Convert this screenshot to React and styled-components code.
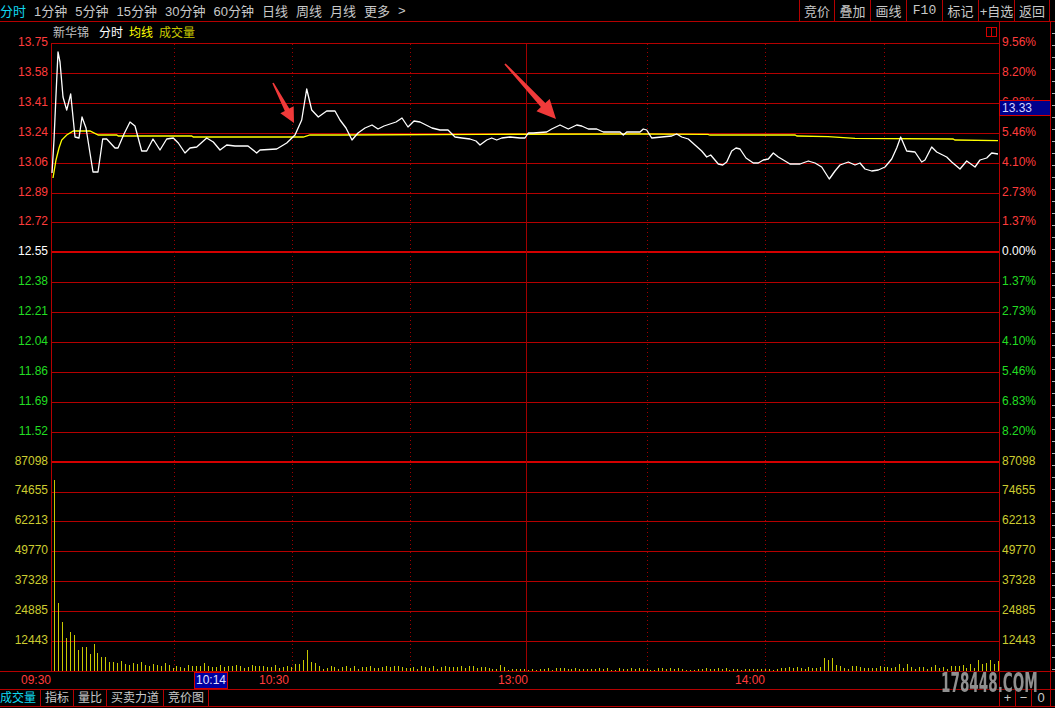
import React from "react";
import styled, { createGlobalStyle } from "styled-components";

const LINE = "#b40000";
const LINE_HI = "#d40000";
const RED = "#ff3c3c";
const GREEN = "#22dd22";
const YELLOW = "#cccc30";
const GRAY = "#c8c8c8";
const CYAN = "#10d8f0";

const STEP = 628 / 21; // 가격/거래량 눈금 간격

const GlobalStyle = createGlobalStyle`
  html, body { margin: 0; padding: 0; background: #000; }
  body { font-family: "Liberation Sans", "Noto Sans CJK SC", sans-serif; }
`;

const Screen = styled.div`
  position: relative;
  width: 1055px;
  height: 708px;
  overflow: hidden;
  background: #000;
  display: flex;
  flex-direction: column;
`;

const Toolbar = styled.div`
  display: flex;
  height: 22px;
  box-sizing: border-box;
  border-bottom: 1px solid ${LINE};
  padding-right: 5px;
`;

const Periods = styled.div`
  flex: 1;
  display: flex;
  align-items: center;
  gap: 8px;
  font-size: 13px;
`;

const Period = styled.span`
  color: ${(p) => (p.$active ? CYAN : GRAY)};
  white-space: nowrap;
`;

const ToolBtn = styled.div`
  width: ${(p) => p.$w}px;
  box-sizing: border-box;
  border-left: 1px solid ${LINE};
  display: flex;
  align-items: center;
  justify-content: center;
  color: ${GRAY};
  font-size: 13px;
  font-family: ${(p) => (p.$mono ? '"Liberation Mono", monospace' : "inherit")};
  &:last-child {
    border-right: 1px solid ${LINE};
  }
`;

const Body = styled.div`
  display: grid;
  grid-template-columns: 51px 948px 52px 4px;
  grid-template-rows: 21px 628px;
`;

const AxisColumn = styled.div`
  grid-column: ${(p) => p.$col};
  grid-row: 1 / 3;
  position: relative;
  display: flex;
  flex-direction: column;
  padding-top: ${21 - STEP / 2}px;
  box-sizing: border-box;
  ${(p) =>
    p.$side === "right" &&
    `border-left: 1px solid ${LINE}; border-right: 1px solid ${LINE};`}
`;

const AxisLabel = styled.div`
  height: ${STEP}px;
  line-height: ${STEP}px;
  flex-shrink: 0;
  font-size: 12px;
  color: ${(p) => p.$color};
  text-align: ${(p) => (p.$side === "right" ? "left" : "right")};
  padding: ${(p) => (p.$side === "right" ? "0 0 0 2px" : "0 3px 0 0")};
  white-space: nowrap;
`;

// 십자선 가격 표시
const PriceTag = styled.div`
  position: absolute;
  left: -1px;
  right: -1px;
  top: 78px;
  height: 16px;
  box-sizing: border-box;
  background: #00008c;
  border: 1px solid ${LINE_HI};
  color: #d4d4ff;
  font-size: 12px;
  line-height: 14px;
  padding-left: 2px;
`;

const Legend = styled.div`
  grid-column: 2;
  grid-row: 1;
  display: flex;
  align-items: center;
  padding: 0 2px 2px;
  font-size: 12px;
`;

const LegendItem = styled.span`
  color: ${(p) => p.$color};
  margin-right: ${(p) => p.$gap || 6}px;
`;

const Filler = styled.div`
  flex: 1;
`;

const ChartSvg = styled.svg`
  grid-column: 2;
  grid-row: 2;
  display: block;
`;

const Strip = styled.div`
  grid-column: 4;
  grid-row: 1 / 3;
  background: repeating-linear-gradient(to bottom, transparent 0 11px, #b0b0b0 11px 12px);
  background-size: 3px 100%;
  background-repeat: no-repeat;
  background-position: 1px 0;
`;

const TimeRow = styled.div`
  display: flex;
  height: 18px;
  box-sizing: border-box;
  border-top: 1px solid ${LINE};
  font-size: 12px;
  padding-right: 4px;
`;

const TimeCell = styled.div`
  width: ${(p) => p.$w}px;
  flex-shrink: 0;
  text-align: right;
  color: ${RED};
  line-height: 17px;
`;

const CursorTime = styled.div`
  width: 34px;
  box-sizing: border-box;
  background: #0000a0;
  border: 1px solid ${LINE_HI};
  color: #e0e0ff;
  text-align: center;
  line-height: 15px;
`;

const AxisEnd = styled.div`
  width: 52px;
  box-sizing: border-box;
  border-left: 1px solid ${LINE};
  border-right: 1px solid ${LINE};
`;

const TabRow = styled.div`
  display: flex;
  height: 18px;
  box-sizing: border-box;
  border-top: 1px solid ${LINE};
  border-bottom: 1px solid ${LINE};
  font-size: 12px;
  padding-right: 4px;
`;

const Tab = styled.div`
  padding: 0 4px;
  &:first-child {
    padding-left: 0;
  }
  border-right: 1px solid ${LINE};
  color: ${(p) => (p.$active ? CYAN : GRAY)};
  line-height: 16px;
  white-space: nowrap;
`;

const ZoomBtn = styled.div`
  width: ${(p) => p.$w}px;
  box-sizing: border-box;
  border-left: 1px solid ${LINE};
  color: ${GRAY};
  text-align: center;
  line-height: 16px;
  font-size: 13px;
  &:last-child {
    border-right: 1px solid ${LINE};
  }
`;

const Watermark = styled.div`
  position: absolute;
  left: 941px;
  top: 668px;
  font-family: "DejaVu Sans Condensed", "DejaVu Sans", sans-serif;
  font-weight: bold;
  font-size: 26px;
  color: rgba(185, 185, 185, 0.78);
  transform: scaleX(0.58);
  transform-origin: left top;
  filter: blur(0.7px);
  text-shadow: 0 0 3px #000;
  pointer-events: none;
`;

const periods = ["分时", "1分钟", "5分钟", "15分钟", "30分钟", "60分钟", "日线", "周线", "月线", "更多", ">"];
const tools = [
  { t: "竞价", w: 35 },
  { t: "叠加", w: 36 },
  { t: "画线", w: 36 },
  { t: "F10", w: 36, mono: true },
  { t: "标记", w: 36 },
  { t: "+自选", w: 36 },
  { t: "返回", w: 36 },
];

const leftLabels = [
  ["13.75", RED], ["13.58", RED], ["13.41", RED], ["13.24", RED], ["13.06", RED], ["12.89", RED], ["12.72", RED],
  ["12.55", "#ffffff"],
  ["12.38", GREEN], ["12.21", GREEN], ["12.04", GREEN], ["11.86", GREEN], ["11.69", GREEN], ["11.52", GREEN],
  ["87098", YELLOW], ["74655", YELLOW], ["62213", YELLOW], ["49770", YELLOW], ["37328", YELLOW], ["24885", YELLOW], ["12443", YELLOW],
];

const rightLabels = [
  ["9.56%", RED], ["8.20%", RED], ["6.83%", RED], ["5.46%", RED], ["4.10%", RED], ["2.73%", RED], ["1.37%", RED],
  ["0.00%", "#ffffff"],
  ["1.37%", GREEN], ["2.73%", GREEN], ["4.10%", GREEN], ["5.46%", GREEN], ["6.83%", GREEN], ["8.20%", GREEN],
  ["87098", YELLOW], ["74655", YELLOW], ["62213", YELLOW], ["49770", YELLOW], ["37328", YELLOW], ["24885", YELLOW], ["12443", YELLOW],
];

// 분시 가격선 (화면 좌표)
const pricePts = [
  [52, 173], [54, 140], [56, 95], [58, 52], [60, 62], [63, 97], [66.7, 110], [70.7, 94], [75, 137], [79, 138], [82, 117],
  [86, 128], [93, 172], [98, 172], [102.7, 139], [106.7, 139], [115, 148], [118, 148], [124, 134], [130, 122], [135, 126],
  [141.7, 151], [146.7, 151], [153, 139], [160, 150], [166.7, 139], [173.3, 138], [178.3, 143], [185, 153], [190, 148],
  [196.7, 147], [206.7, 138], [213.3, 142], [220, 150], [226.7, 145], [235, 146], [248, 146], [256.7, 153], [260, 150],
  [276.7, 149], [286.7, 143], [295, 135], [301.7, 120], [306.7, 89], [311.7, 110], [318.3, 117], [326.7, 111], [335, 111],
  [340, 120], [346, 128], [352, 140], [358, 133], [365, 128], [372, 125], [378, 129], [384, 126], [390, 124], [396, 122],
  [402, 118], [408, 127], [414, 121], [420, 122], [426, 125], [432, 128], [440, 130], [448, 130], [455, 137], [462, 138],
  [470, 139], [476, 141], [480, 145], [486.7, 140], [491.7, 138], [496.7, 140], [501.7, 138], [510, 137], [520, 138],
  [525, 138], [528.3, 133], [533.3, 133], [546.7, 132], [551.7, 129], [560, 125], [568.3, 129], [576.7, 125], [581.7, 126],
  [588.3, 129], [596.7, 129], [603.3, 132], [620, 132], [623.3, 135], [626.7, 132], [640, 132], [643.3, 129], [646.7, 130],
  [651.7, 138], [671.7, 136], [676.7, 134], [681.7, 137], [688.3, 139], [695, 145], [701.7, 151], [706.7, 157], [710.7, 155],
  [718.3, 164], [722.7, 165], [726.7, 162], [731.7, 151], [736, 148], [740, 149], [746, 158], [753.3, 163], [758.3, 163],
  [763.3, 160], [768.3, 159], [773.3, 153], [778.3, 157], [781.7, 159], [790, 164], [800, 164], [808.3, 161], [815, 163],
  [821.7, 167], [829.3, 179], [835, 171], [840, 165], [848.3, 162], [855, 165], [860, 163], [865, 169], [871.7, 171],
  [878.3, 170], [885, 167], [891.7, 159], [896.7, 148], [900.7, 137], [906.7, 151], [915, 152], [921.7, 162], [925, 160],
  [931.7, 147], [936.7, 152], [946.7, 157], [951.7, 162], [960, 169], [966.7, 161], [975, 167], [980, 160], [986.7, 158],
  [991.7, 153], [998, 154],
];

// 균선
const avgPts = [
  [53, 178], [56, 160], [59, 148], [61.7, 140], [66.7, 135], [73.3, 131], [90, 131], [98.3, 135], [116.7, 135], [118.3, 136],
  [191.7, 136], [193.3, 137], [303.3, 137], [310, 135], [340, 135], [480, 134.3], [640, 134], [708, 134.3], [710, 135],
  [795, 135], [797, 136], [828, 136.7], [855, 138.3], [953, 139], [955, 140], [998, 140.7],
];

const volumeBars = (() => {
  let seed = 11;
  const rnd = () => {
    seed = (seed * 16807) % 2147483647;
    return seed / 2147483647;
  };
  const head = [191, 68, 49, 33, 39, 36, 21, 24, 24, 17, 27, 18, 14, 14, 9, 9, 8, 10, 7, 6, 8, 7, 9, 6, 5, 7, 6, 5, 8, 6];
  const spikes = {
    38: 8, 61: 7, 62: 7, 63: 11, 64: 21, 65: 9, 66: 8, 67: 5, 87: 5, 113: 6, 195: 13, 196: 11, 197: 13, 198: 6,
    214: 7, 216: 7, 223: 6, 230: 6, 232: 7, 234: 11, 235: 7, 236: 8, 237: 11, 238: 7, 239: 10,
  };
  const out = [];
  for (let i = 0; i < 240; i++) {
    let h;
    if (i < head.length) h = head[i];
    else if (spikes[i]) h = spikes[i];
    else if (i < 60) h = 3 + Math.round(rnd() * 4);
    else if (i < 115) h = 2 + Math.round(rnd() * 3);
    else if (i < 185) h = 1 + Math.round(rnd() * 2);
    else h = 2 + Math.round(rnd() * 3);
    out.push(h);
  }
  return out;
})();

const toPoints = (pts) => pts.map((p) => p.join(",")).join(" ");

const arrowPoints = (tx, ty, hx, hy, headLen, headW, shaftW) => {
  const len = Math.hypot(hx - tx, hy - ty);
  const ux = (hx - tx) / len;
  const uy = (hy - ty) / len;
  const nx = -uy;
  const ny = ux;
  const bx = hx - ux * headLen;
  const by = hy - uy * headLen;
  return toPoints([
    [tx + nx * 0.8, ty + ny * 0.8],
    [bx + (nx * shaftW) / 2, by + (ny * shaftW) / 2],
    [bx + (nx * headW) / 2, by + (ny * headW) / 2],
    [hx, hy],
    [bx - (nx * headW) / 2, by - (ny * headW) / 2],
    [bx - (nx * shaftW) / 2, by - (ny * shaftW) / 2],
    [tx - nx * 0.8, ty - ny * 0.8],
  ]);
};

const PanelIcon = () => (
  <svg width="11" height="10" viewBox="0 0 11 10">
    <rect x="0.5" y="0.5" width="10" height="9" fill="none" stroke={LINE_HI} />
    <line x1="5.5" y1="0" x2="5.5" y2="10" stroke={LINE_HI} />
  </svg>
);

const Chart = () => {
  const rows = Array.from({ length: 20 }, (_, i) => i + 1);
  const dotted = [174, 292, 410, 647, 765, 884];
  return (
    <ChartSvg width="948" height="628" viewBox="51 43 948 628">
      <g shapeRendering="crispEdges">
        <line x1="51" y1="43.5" x2="999" y2="43.5" stroke={LINE} />
        <line x1="51.5" y1="43" x2="51.5" y2="671" stroke={LINE} />
        {rows.map((i) => {
          const thick = i === 7 || i === 14;
          const y = Math.round(43 + i * STEP) + (thick ? 0 : 0.5);
          return (
            <line key={i} x1="52" y1={y} x2="999" y2={y} stroke={thick ? LINE_HI : LINE} strokeWidth={thick ? 2 : 1} />
          );
        })}
        {dotted.map((x) => (
          <line key={x} x1={x + 0.5} y1="44" x2={x + 0.5} y2="671" stroke="#a00000" strokeDasharray="1 3" />
        ))}
        <line x1="526.5" y1="44" x2="526.5" y2="671" stroke="#a00000" />
        {volumeBars.map((h, i) => {
          const x = Math.round(54 + i * 3.95) + 0.5;
          return <line key={i} x1={x} y1="671" x2={x} y2={671 - h} stroke="#c8c800" />;
        })}
      </g>
      <polyline points={toPoints(avgPts)} fill="none" stroke="#ffff00" strokeWidth="1.3" />
      <polyline points={toPoints(pricePts)} fill="none" stroke="#ffffff" strokeWidth="1.3" strokeLinejoin="round" />
      <polygon points={arrowPoints(273, 83, 294, 123, 15, 15, 5)} fill="#f03a3a" />
      <polygon points={arrowPoints(505, 64, 556, 119, 19, 18, 6)} fill="#f03a3a" />
    </ChartSvg>
  );
};

const App = () => {
  return (
    <>
      <GlobalStyle />
      <Screen>
        <Toolbar>
          <Periods>
            {periods.map((p, i) => (
              <Period key={p} $active={i === 0}>
                {p}
              </Period>
            ))}
          </Periods>
          {tools.map((b) => (
            <ToolBtn key={b.t} $w={b.w} $mono={b.mono}>
              {b.t}
            </ToolBtn>
          ))}
        </Toolbar>

        <Body>
          <AxisColumn $col={1}>
            {leftLabels.map(([t, c], i) => (
              <AxisLabel key={i} $color={c}>
                {t}
              </AxisLabel>
            ))}
          </AxisColumn>

          <Legend>
            <LegendItem $color="#c0c0c0" $gap={10}>新华锦</LegendItem>
            <LegendItem $color="#ffffff">分时</LegendItem>
            <LegendItem $color="#ffff00">均线</LegendItem>
            <LegendItem $color="#c8c800">成交量</LegendItem>
            <Filler />
            <PanelIcon />
          </Legend>

          <Chart />

          <AxisColumn $col={3} $side="right">
            {rightLabels.map(([t, c], i) => (
              <AxisLabel key={i} $color={c} $side="right">
                {t}
              </AxisLabel>
            ))}
            <PriceTag>13.33</PriceTag>
          </AxisColumn>

          <Strip />
        </Body>

        <TimeRow>
          <TimeCell $w={51}>09:30</TimeCell>
          <TimeCell $w={143} />
          <CursorTime>10:14</CursorTime>
          <TimeCell $w={61}>10:30</TimeCell>
          <TimeCell $w={239}>13:00</TimeCell>
          <TimeCell $w={237}>14:00</TimeCell>
          <Filler />
          <AxisEnd />
        </TimeRow>

        <TabRow>
          <Tab $active>成交量</Tab>
          <Tab>指标</Tab>
          <Tab>量比</Tab>
          <Tab>买卖力道</Tab>
          <Tab>竞价图</Tab>
          <Filler />
          <ZoomBtn $w={16}>+</ZoomBtn>
          <ZoomBtn $w={16}>−</ZoomBtn>
          <ZoomBtn $w={20}>0</ZoomBtn>
        </TabRow>

        <Watermark>178448.COM</Watermark>
      </Screen>
    </>
  );
};

export default App;
